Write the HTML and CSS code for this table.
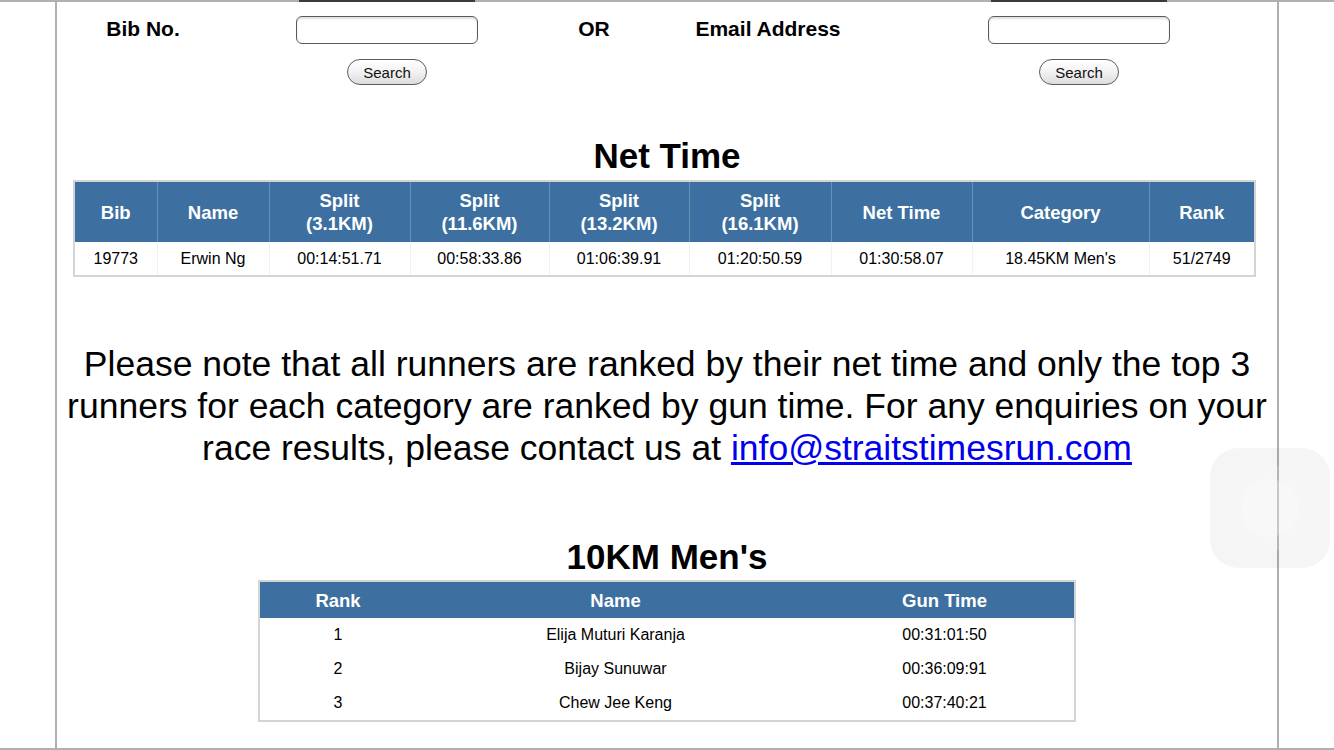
FILE: index.html
```html
<!DOCTYPE html>
<html lang="en">
<head>
  <meta charset="UTF-8" />
  <meta name="viewport" content="width=device-width, initial-scale=1.0" />
  <title>Race Results</title>
  <link rel="stylesheet" href="styles.css">
</head>
<body>
  <div class="frame">
    <div class="cutoff">
      <span class="cut cut-bib"></span>
      <span class="cut cut-email"></span>
    </div>
    <div class="page">
      <form class="lookup" onsubmit="return false;">
        <label class="lookup-label" for="bib">Bib No.</label>
        <input class="lookup-input" type="text" id="bib">
        <span class="lookup-label">OR</span>
        <label class="lookup-label" for="email">Email Address</label>
        <input class="lookup-input" type="text" id="email">

        <button class="search-btn col-bib">Search</button>
        <button class="search-btn col-email">Search</button>
      </form>

      <h2 class="section-title">Net Time</h2>
      <table class="results net-table">
        <colgroup>
          <col style="width:83px"><col style="width:112px"><col style="width:141px">
          <col style="width:139px"><col style="width:140px"><col style="width:142px">
          <col style="width:141px"><col style="width:177px"><col style="width:106px">
        </colgroup>
        <thead>
          <tr>
            <th>Bib</th>
            <th>Name</th>
            <th>Split<br>(3.1KM)</th>
            <th>Split<br>(11.6KM)</th>
            <th>Split<br>(13.2KM)</th>
            <th>Split<br>(16.1KM)</th>
            <th>Net Time</th>
            <th>Category</th>
            <th>Rank</th>
          </tr>
        </thead>
        <tbody>
          <tr>
            <td>19773</td>
            <td>Erwin Ng</td>
            <td>00:14:51.71</td>
            <td>00:58:33.86</td>
            <td>01:06:39.91</td>
            <td>01:20:50.59</td>
            <td>01:30:58.07</td>
            <td>18.45KM Men's</td>
            <td>51/2749</td>
          </tr>
        </tbody>
      </table>

      <p class="notice">Please note that all runners are ranked by their net time and only the top 3 runners for each category are ranked by gun time. For any enquiries on your race results, please contact us at <a href="mailto:info@straitstimesrun.com">info@straitstimesrun.com</a></p>

      <h2 class="section-title category-title">10KM Men's</h2>
      <table class="results top-table">
        <colgroup>
          <col style="width:157px"><col style="width:399px"><col style="width:260px">
        </colgroup>
        <thead>
          <tr>
            <th>Rank</th>
            <th class="no-line">Name</th>
            <th class="no-line">Gun Time</th>
          </tr>
        </thead>
        <tbody>
          <tr><td>1</td><td>Elija Muturi Karanja</td><td>00:31:01:50</td></tr>
          <tr><td>2</td><td>Bijay Sunuwar</td><td>00:36:09:91</td></tr>
          <tr><td>3</td><td>Chew Jee Keng</td><td>00:37:40:21</td></tr>
        </tbody>
      </table>
    </div>
  </div>

  <div class="assistive-touch"></div>
</body>
</html>
```

FILE: styles.css
```css
:root {
  --frame-gray: #b0b0b0;
  --head-blue: #3d70a0;
  --head-line: #6a92b9;
  --table-border: #d4d4d4;
  --text-dark: #000000;
}

body {
  margin: 0;
  font-family: 'Liberation Sans', Arial, sans-serif;
  color: var(--text-dark);
  background: #ffffff;
}

.frame {
  height: 750px;
  box-sizing: border-box;
  border-bottom: 2px solid var(--frame-gray);
  overflow: hidden;
  display: flex;
  flex-direction: column;
}

/* top edge: bottom of the previous row, scrolled off */
.cutoff {
  display: grid;
  grid-template-columns: 57px 172px 316px 98px 250px 372px;
  height: 2px;
  flex: none;
  background: var(--frame-gray);
}

.cut {
  justify-self: center;
  width: 176px;
  background: #3a3a3a;
}

.cut-bib { grid-column: 3; }
.cut-email { grid-column: 6; }

.page {
  flex: 1;
  margin-left: 55px;
  width: 1224px;
  box-sizing: border-box;
  border-left: 2px solid var(--frame-gray);
  border-right: 2px solid var(--frame-gray);
}

.lookup {
  display: grid;
  grid-template-columns: 172px 316px 98px 250px 372px;
  grid-template-rows: 28px 26px;
  row-gap: 15px;
  align-items: center;
  justify-items: center;
  padding-top: 14px;
}

.lookup-label {
  font-size: 21px;
  font-weight: bold;
  margin-top: -2px;
}

.lookup-input {
  width: 182px;
  height: 28px;
  box-sizing: border-box;
  border: 1px solid #5a5a5a;
  border-radius: 6px;
  box-shadow: inset 0 2px 2px rgba(0,0,0,0.12);
  background: #fff;
}

.search-btn {
  width: 80px;
  height: 26px;
  border: 1px solid #5c5c5c;
  border-radius: 13px;
  background: linear-gradient(#ffffff, #f2f2f2 50%, #dcdcdc);
  font-family: 'Liberation Sans', Arial, sans-serif;
  font-size: 15px;
  color: #111;
  padding: 0;
}

.col-bib { grid-column: 2; }
.col-email { grid-column: 5; }

.section-title {
  margin: 51px 0 4px;
  text-align: center;
  font-size: 35px;
  line-height: 40px;
  font-weight: bold;
}

.results {
  border-collapse: collapse;
  table-layout: fixed;
  border: 2px solid var(--table-border);
  text-align: center;
}

.results th {
  background: var(--head-blue);
  color: #fff;
  font-weight: bold;
  font-size: 18.5px;
  line-height: 23px;
  border-left: 1px solid var(--head-line);
  padding: 0;
}

.results th:first-child,
.results th.no-line { border-left: none; }

.results td {
  font-size: 16px;
  padding: 0;
  border-left: 1px solid #f2f2f2;
}

.results td:first-child { border-left: none; }

.net-table {
  margin-left: 16px;
  width: 1181px;
}

.net-table th { height: 60px; }
.net-table td { height: 33px; }

.notice {
  margin: 66px 0 0;
  padding: 0 4px;
  text-align: center;
  font-size: 35.5px;
  line-height: 42px;
}

.notice a { color: #0000ee; }

.category-title {
  margin-top: 68px;
  margin-bottom: 3px;
}

.top-table {
  margin: 0 auto;
  width: 816px;
}

.top-table th { height: 36px; }
.top-table td { height: 34px; }
.top-table td { border-left: none; }

.assistive-touch {
  position: fixed;
  left: 1210px;
  top: 448px;
  width: 120px;
  height: 120px;
  border-radius: 28px;
  background:
    radial-gradient(circle at 50% 50%, rgba(255,255,255,0.35) 0 28px, rgba(255,255,255,0.15) 29px 42px, transparent 43px),
    rgba(0,0,0,0.04);
}
```
